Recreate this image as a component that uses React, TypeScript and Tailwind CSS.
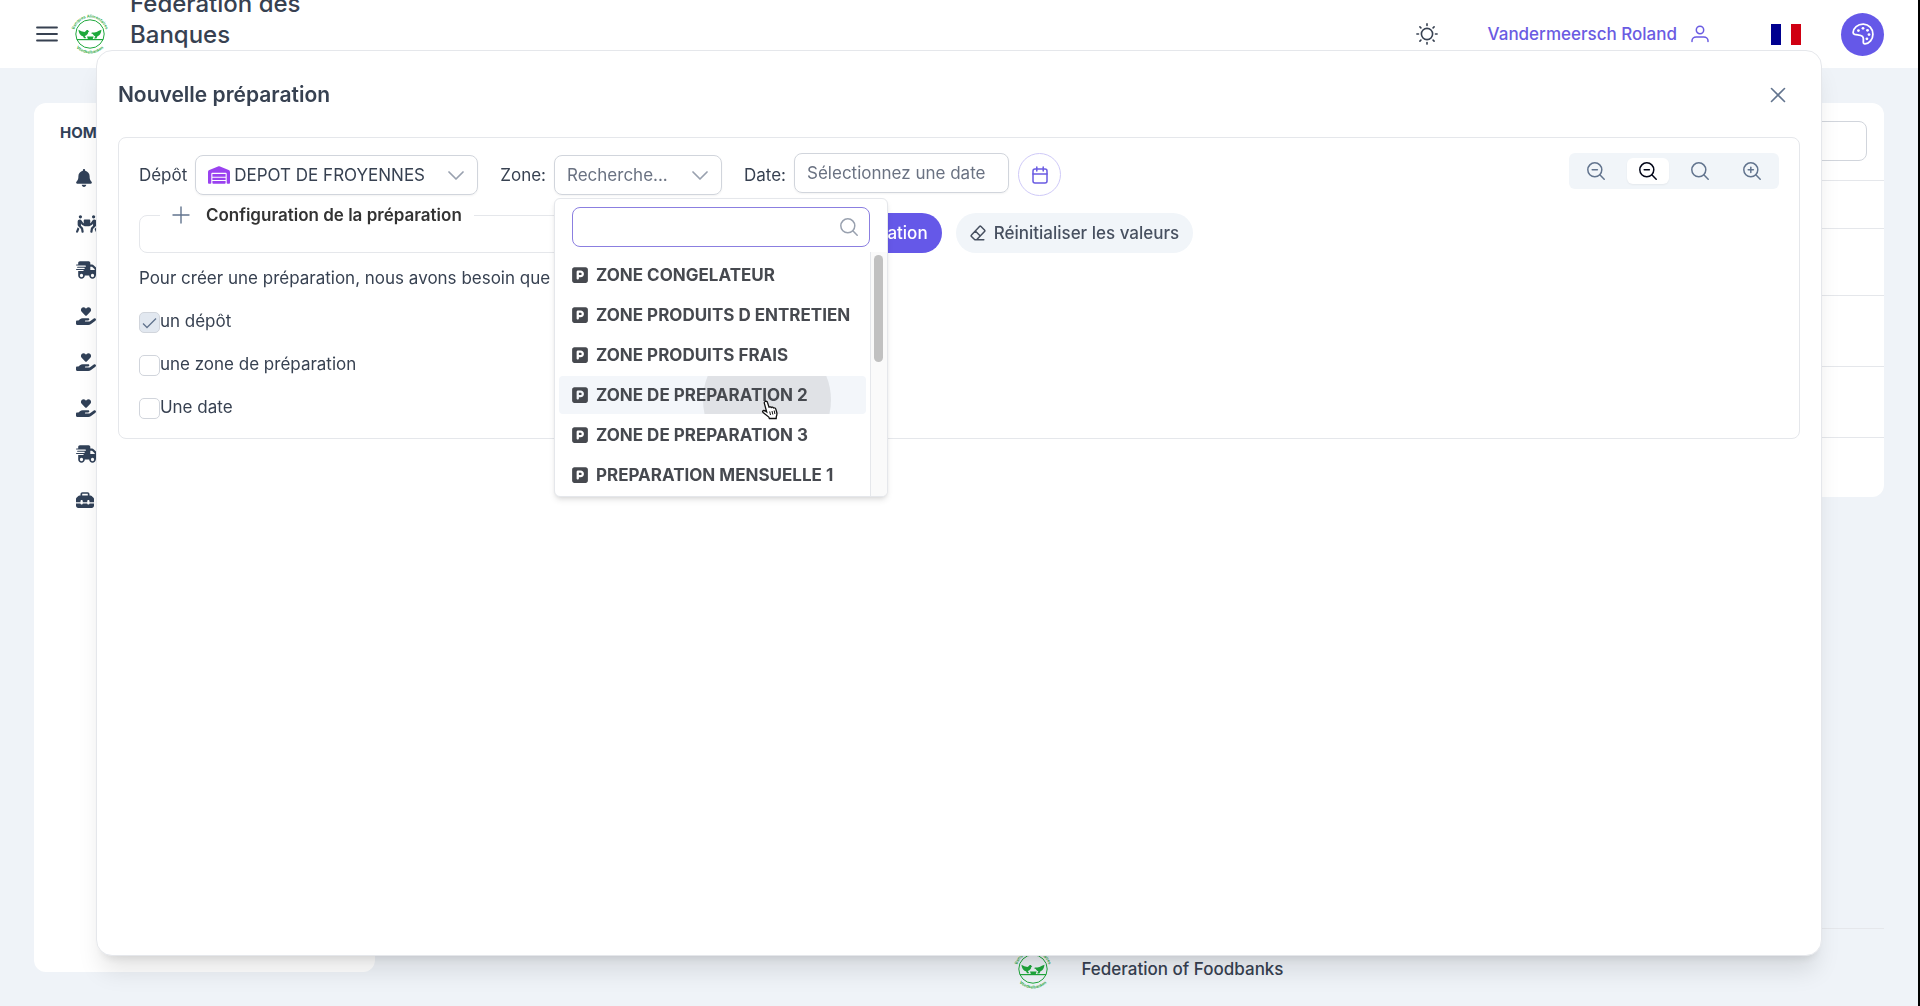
import React, { useState } from "react";
import {
  FaBell,
  FaHandHoldingHeart,
  FaPeopleCarryBox,
  FaSquareParking,
  FaToolbox,
  FaTruckFast,
  FaWarehouse,
} from "react-icons/fa6";

const menu = [
  { icon: FaBell, size: "w-4", label: "Notifications" },
  { icon: FaPeopleCarryBox, size: "w-[22px]", label: "Associations" },
  { icon: FaTruckFast, size: "w-[22px]", label: "Livraisons" },
  { icon: FaHandHoldingHeart, size: "w-5", label: "Dons" },
  { icon: FaHandHoldingHeart, size: "w-5", label: "Donateurs" },
  { icon: FaHandHoldingHeart, size: "w-5", label: "Campagnes" },
  { icon: FaTruckFast, size: "w-[22px]", label: "Transports" },
  { icon: FaToolbox, size: "w-[18px]", label: "Outils" },
];

const zones = [
  "ZONE CONGELATEUR",
  "ZONE PRODUITS D ENTRETIEN",
  "ZONE PRODUITS FRAIS",
  "ZONE DE PREPARATION 2",
  "ZONE DE PREPARATION 3",
  "PREPARATION MENSUELLE 1",
];

const steps = [
  { id: "step-depot", label: "un dépôt", done: true },
  { id: "step-zone", label: "une zone de préparation", done: false },
  { id: "step-date", label: "Une date", done: false },
];

const Logo = ({ id }: { id: string }) => (
  <svg viewBox="0 0 40 42" className="h-[42px] w-10 shrink-0" fill="none">
    <defs>
      <path id={`${id}-top`} d="M4.300 16.500A16.300 16.300 0 0 1 35.700 16.500" />
      <path id={`${id}-bottom`} d="M4.600 32.800A19.400 19.400 0 0 0 35.400 32.800" />
    </defs>
    <circle cx="20" cy="21" r="14.200" stroke="#1fa83c" strokeWidth="1" />
    {/* left bird */}
    <path
      d="M8.500 16.800l2.800 1.500 3.200.6c1.200-.1 1.500-1.700 2.600-1.900.9-.1 1.300.5 1.400 1l.9.400-1.100.5c-.3 2-1.500 3.600-3.600 4.100l1.600 2.200h-2.300l-1-2c-2.700-.4-4.300-3.200-4.500-6.400z"
      fill="#1fa83c"
    />
    {/* right bird */}
    <path
      d="M31.500 16.800l-2.600.900-2.400 1.200-2.200.7-2.300-.2-.9.900 1.600.7c.7 1.200 1.600 2 2.700 2.300l-1.300 2.200h2.300l1.100-2.200c2-.4 3.600-3 4-6.500z"
      fill="#1fa83c"
    />
    <path d="M17 23.600h6.600l-1 2.900H18z" fill="#1fa83c" />
    <path d="M7 26.600h26" stroke="#1fa83c" strokeWidth="1.200" />
    <text fontSize="4" fontWeight="600" fill="#1fa83c" fontFamily="Inter">
      <textPath href={`#${id}-top`}>Banques Alimentaires</textPath>
    </text>
    <text fontSize="4" fontWeight="600" fill="#1fa83c" fontFamily="Inter">
      <textPath href={`#${id}-bottom`} startOffset="50%" textAnchor="middle">
        Voedselbanken
      </textPath>
    </text>
  </svg>
);

const SunIcon = () => (
  <svg viewBox="0 0 22 22" className="h-[22px] w-[22px]" fill="none" stroke="currentColor" strokeWidth="1.600" strokeLinecap="round">
    <circle cx="11" cy="11" r="5.600" />
    <path d="M11 .9v1.600M11 19.500v1.600M.9 11h1.600M19.500 11h1.600M3.900 3.900l1 1M17.100 17.100l1 1M3.900 18.100l1-1M17.100 4.900l1-1" />
  </svg>
);

const UserIcon = () => (
  <svg viewBox="0 0 18 18" className="h-[18px] w-[18px]" fill="none" stroke="currentColor" strokeWidth="1.500" strokeLinecap="round">
    <circle cx="9" cy="5" r="3.700" />
    <path d="M1 16.500v-.8c0-2.200 1.900-3.700 4.200-3.700h7.600c2.300 0 4.200 1.500 4.200 3.700v.8" />
  </svg>
);

const PaletteIcon = () => (
  <svg viewBox="0 0 22 22" className="h-[22px] w-[22px]" fill="none" stroke="currentColor" strokeWidth="1.800" strokeLinejoin="round">
    <path d="M11.500 1.200C5.600 1 1.200 5.200 1.100 9.600c0 1 .5 1.500 1.500 1.800 3.200.7 6.200.3 7.900 1.900 1.500 1.500.8 3.600.8 5.800 0 1.200.6 1.800 1.700 1.700 4.300-.4 7.900-4.400 7.900-9.600 0-5.600-4-9.800-9.400-10z" />
    <g fill="currentColor" stroke="none">
      <circle cx="6.400" cy="7.600" r="1.400" />
      <circle cx="11" cy="5.300" r="1.400" />
      <circle cx="15.500" cy="7.300" r="1.400" />
      <circle cx="17" cy="11.600" r="1.400" />
      <circle cx="14.900" cy="15.800" r="1.400" />
    </g>
  </svg>
);

const SearchIcon = ({ sign = "" }: { sign?: string }) => (
  <svg viewBox="0 0 18 18" className="h-[18px] w-[18px]" fill="none" stroke="currentColor" strokeWidth="1.500" strokeLinecap="round">
    <circle cx="7.800" cy="7.800" r="7" />
    <path d="M12.800 12.800L17.200 17.200" />
    {sign !== "" && <path d="M5.200 7.800h5.200" />}
    {sign === "+" && <path d="M7.800 5.200v5.200" />}
  </svg>
);

const ChevronIcon = () => (
  <svg viewBox="0 0 16 10" className="pointer-events-none absolute right-3.5 top-4 h-2.5 w-4 text-gray-400" fill="none" stroke="currentColor" strokeWidth="1.700" strokeLinecap="round" strokeLinejoin="round">
    <path d="M1 1l7 7 7-7" />
  </svg>
);

const CalendarIcon = () => (
  <svg viewBox="0 0 16 18" className="h-[18px] w-4" fill="none" stroke="currentColor" strokeWidth="1.500" strokeLinecap="round">
    <rect x="1" y="3" width="14" height="14" rx="2" />
    <path d="M1 8h14M4.800 1v4M11.200 1v4" />
  </svg>
);

const EraserIcon = () => (
  <svg viewBox="0 0 16 16" className="h-4 w-4" fill="none" stroke="currentColor" strokeWidth="1.500" strokeLinecap="round" strokeLinejoin="round">
    <path d="M4.800 14.800L1.500 11.500c-.5-.5-.5-1 0-1.500L9.500 1.500c.5-.5 1-.5 1.500 0l3.500 3.500c.5.500.5 1 0 1.500l-7.900 8.300zM5.300 6l5 5M4.800 14.800h9" />
  </svg>
);

const HandCursor = () => (
  <svg viewBox="0 0 18 20" className="pointer-events-none absolute left-[207px] top-[245px] z-20 h-5 w-[18px]">
    <path
      d="M4.200 1.500c1-.6 2 0 2.300 1l1.500 4.600c1-.6 1.900-.3 2.300.4.900-.6 1.800-.3 2.200.5 1-.4 2 0 2.300 1.100l1 3.400c.4 1.600 0 2.900-.5 4.200l-.1 1.800H8.400l-.6-1.400-4.800-3.800c-1-.8-1.900-1.400-1.300-2.200.7-.9 2-.5 3 .2l1 .7L3.300 3.200c-.2-.7.1-1.300.9-1.700z"
      fill="#fff"
      stroke="#111"
      strokeWidth="1.300"
    />
    <path d="M8.700 11.500l.8 3.500M11 11l.8 3.500M13.200 10.500l.7 3.500" stroke="#111" strokeWidth="1" />
  </svg>
);

const Header = () => (
  <header className="flex h-[68px] items-center justify-between bg-white pl-[35px] pr-[34px]">
    <div className="flex items-center">
      <button aria-label="Menu">
        <svg viewBox="0 0 24 20" className="h-5 w-6" stroke="currentColor" strokeWidth="1.800" strokeLinecap="round">
          <path d="M2 3.500h20M2 10h20M2 16.500h20" />
        </svg>
      </button>
      <a href="#" className="ml-[11px] flex h-[68px] items-center gap-5">
        <Logo id="logo-header" />
        <span className="w-[180px] text-2xl/[31px] font-medium">
          Federation des Banques Alimentaires
        </span>
      </a>
    </div>
    <div className="flex items-center text-[#6a5be2]">
      <button aria-label="Thème" className="mr-[50px] text-[#374151]">
        <SunIcon />
      </button>
      <a href="#" className="mr-[62px] flex items-center gap-3.5 font-medium">
        Vandermeersch Roland
        <UserIcon />
      </a>
      <button aria-label="Français" className="mr-10 flex h-[21px] w-[30px]">
        <span className="h-full flex-1 bg-[#00008f]" />
        <span className="h-full flex-1 bg-white" />
        <span className="h-full flex-1 bg-[#d00012]" />
      </button>
      <button
        aria-label="Palette"
        className="flex h-[43px] w-[43px] items-center justify-center rounded-full bg-[#6558e8] text-white"
      >
        <PaletteIcon />
      </button>
    </div>
  </header>
);

const Sidebar = () => (
  <nav className="mb-[34px] w-[341px] shrink-0 rounded-xl bg-white px-[26px] pt-5 text-slate-700">
    <p className="text-[15px] font-bold leading-5">HOME</p>
    <ul className="mt-3 flex flex-col pl-4">
      {menu.map(({ icon: Icon, size, label }) => (
        <li key={label}>
          <a href="#" className="flex h-[46px] items-center gap-3">
            <Icon className={`h-[18px] ${size}`} />
            {label}
          </a>
        </li>
      ))}
    </ul>
  </nav>
);

const Content = () => (
  <main className="flex flex-1 flex-col justify-between">
    <div className="rounded-xl bg-white">
      <div className="flex h-[78px] justify-end border-b border-gray-200 pr-[17px] pt-[18px]">
        <input
          aria-label="Rechercher"
          className="h-10 w-64 rounded-lg border border-gray-300"
        />
      </div>
      <div className="h-12 border-b border-gray-200" />
      <div className="h-[67px] border-b border-gray-200" />
      <div className="h-[71px] border-b border-gray-200" />
      <div className="h-[71px] border-b border-gray-200" />
      <div className="h-[59px]" />
    </div>
    <footer className="flex h-[78px] items-center justify-center gap-7 border-t border-gray-200 pt-0.5">
      <Logo id="logo-footer" />
      <span className="font-medium">Federation of Foodbanks</span>
    </footer>
  </main>
);

const ZoneList = () => (
  <div className="absolute left-0 top-[43px] z-10 w-[334px] overflow-hidden rounded-md border border-gray-200 bg-white shadow-md">
    <div className="relative px-[17px] pb-[5px] pt-2">
      <input
        aria-label="Filtrer les zones"
        className="h-10 w-full rounded-lg border border-[#8b7fe0] pl-3 pr-10 outline-none"
      />
      <span className="absolute right-[29px] top-[19px] text-gray-400">
        <SearchIcon />
      </span>
    </div>
    <div className="flex">
      <ul className="flex flex-1 flex-col gap-0.5 px-1 pb-0.5 pt-1 font-bold text-[#46494f]">
        {zones.map((zone, i) => (
          <li
            key={zone}
            className={`relative flex h-[38px] items-center gap-2 overflow-hidden whitespace-nowrap rounded-[4px] pl-[13px] ${
              i === 3 ? "bg-[#f3f6fa]" : ""
            }`}
          >
            {i === 3 && (
              <span className="absolute -top-10 left-36 h-32 w-32 rounded-full bg-black/8" />
            )}
            <FaSquareParking className="relative h-[18px] w-4 shrink-0" />
            <span className="relative">{zone}</span>
          </li>
        ))}
      </ul>
      <div className="w-[17px] border-l border-gray-200 bg-[#fafafa] px-[3px] pt-[3px]">
        <div className="h-[107px] w-[9px] rounded-full bg-[#c1c1c1]" />
      </div>
    </div>
  </div>
);

const App = () => {
  const [zoom, setZoom] = useState(1);

  return (
    <div className="flex min-h-screen flex-col border-r-2 border-black bg-[#eff3f8] font-['Inter',sans-serif] text-[17px] leading-[26px] text-[#374151]">
      <Header />
      <div className="flex flex-1 gap-[38px] px-[34px] pt-[35px]">
        <Sidebar />
        <Content />
      </div>

      <div className="fixed inset-y-0 left-0 right-0.5 flex items-center justify-center">
        <section
          role="dialog"
          aria-labelledby="dialog-title"
          className="h-[90vh] w-[90%] rounded-2xl border border-gray-200 bg-white px-[21px] shadow-xl"
        >
          <div className="flex h-[86px] items-center justify-between pr-3.5 pt-0.5">
            <h2 id="dialog-title" className="text-[21px] font-semibold">
              Nouvelle préparation
            </h2>
            <button aria-label="Fermer" className="text-slate-500">
              <svg viewBox="0 0 16 16" className="h-4 w-4" stroke="currentColor" strokeWidth="1.600" strokeLinecap="round">
                <path d="M1.500 1.500l13 13M14.500 1.500l-13 13" />
              </svg>
            </button>
          </div>

          <div className="rounded-lg border border-gray-200 px-5 pb-[18px] pt-[15px]">
            <div className="flex items-start justify-between">
              <div className="flex items-center">
                <label htmlFor="depot" className="mr-2">
                  Dépôt
                </label>
                <div className="relative mr-[22px]">
                  <FaWarehouse className="pointer-events-none absolute left-[13px] top-[11px] h-[18px] w-[22px] text-[#9a42f0]" />
                  <select
                    id="depot"
                    className="h-10 w-[283px] appearance-none rounded-lg border border-gray-300 bg-transparent pl-[38px] shadow-xs"
                  >
                    <option>DEPOT DE FROYENNES</option>
                  </select>
                  <ChevronIcon />
                </div>
                <label htmlFor="zone" className="mr-2">
                  Zone:
                </label>
                <div className="relative mr-[22px]">
                  <select
                    id="zone"
                    className="h-10 w-[168px] appearance-none rounded-lg border border-gray-300 bg-transparent pl-3 text-gray-500 shadow-xs"
                  >
                    <option>Recherche...</option>
                  </select>
                  <ChevronIcon />
                  <ZoneList />
                  <HandCursor />
                </div>
                <label htmlFor="date" className="mr-2">
                  Date:
                </label>
                <div className="flex items-start gap-[9px]">
                  <input
                    id="date"
                    placeholder="Sélectionnez une date"
                    className="h-10 w-[215px] rounded-lg border border-gray-300 px-3 shadow-xs placeholder:text-gray-500"
                  />
                  <button
                    aria-label="Calendrier"
                    className="flex h-[43px] w-[43px] items-center justify-center rounded-full border border-[#cfcaf8] text-[#6a5be2]"
                  >
                    <CalendarIcon />
                  </button>
                </div>
              </div>

              <div className="flex h-9 items-center gap-2.5 rounded-md bg-slate-100 px-1.5">
                {["-", "-", "", "+"].map((sign, i) => (
                  <button
                    key={i}
                    aria-label={`Zoom ${i + 1}`}
                    onClick={() => setZoom(i)}
                    className={`flex h-[26px] w-[42px] items-center justify-center rounded-md ${
                      zoom === i ? "bg-white text-slate-950 shadow-xs" : "text-slate-500"
                    }`}
                  >
                    <SearchIcon sign={sign} />
                  </button>
                ))}
              </div>
            </div>

            <div className="mt-1.5 flex items-end">
              <fieldset className="h-[51px] w-1/3 rounded-lg border border-gray-200 pl-5">
                <legend className="px-3">
                  <button className="flex items-center gap-4 font-semibold text-[#333]">
                    <svg viewBox="0 0 18 18" className="h-[18px] w-[18px] text-slate-500" stroke="currentColor" strokeWidth="1.400" strokeLinecap="round">
                      <path d="M9 1v16M1 9h16" />
                    </svg>
                    Configuration de la préparation
                  </button>
                </legend>
              </fieldset>
              <button className="ml-5 h-10 w-[236px] rounded-full bg-[#6558e8] pr-3.5 text-right font-medium text-white">
                Créer la préparation
              </button>
              <button className="ml-3.5 flex h-10 items-center gap-2 rounded-full bg-slate-100 px-3.5 font-medium text-[#475060]">
                <EraserIcon />
                Réinitialiser les valeurs
              </button>
            </div>

            <p className="mt-3">
              Pour créer une préparation, nous avons besoin que vous choisissiez :
            </p>
            <ul className="mt-[17px] flex flex-col gap-[17px]">
              {steps.map((step) => (
                <li key={step.id} className="flex h-[26px] items-center">
                  <span className="relative mt-0.5 h-[21px] w-[21px]">
                    <input
                      id={step.id}
                      type="checkbox"
                      defaultChecked={step.done}
                      className="peer block h-[21px] w-[21px] appearance-none rounded-[5px] border border-gray-300 bg-white checked:bg-slate-200"
                    />
                    <svg viewBox="0 0 21 21" className="pointer-events-none absolute inset-0 hidden text-slate-500 peer-checked:block" fill="none" stroke="currentColor" strokeWidth="1.300">
                      <path d="M4 11.500l4 4L17 6.500" />
                    </svg>
                  </span>
                  <label htmlFor={step.id}>{step.label}</label>
                </li>
              ))}
            </ul>
          </div>
        </section>
      </div>
    </div>
  );
};

export default App;
